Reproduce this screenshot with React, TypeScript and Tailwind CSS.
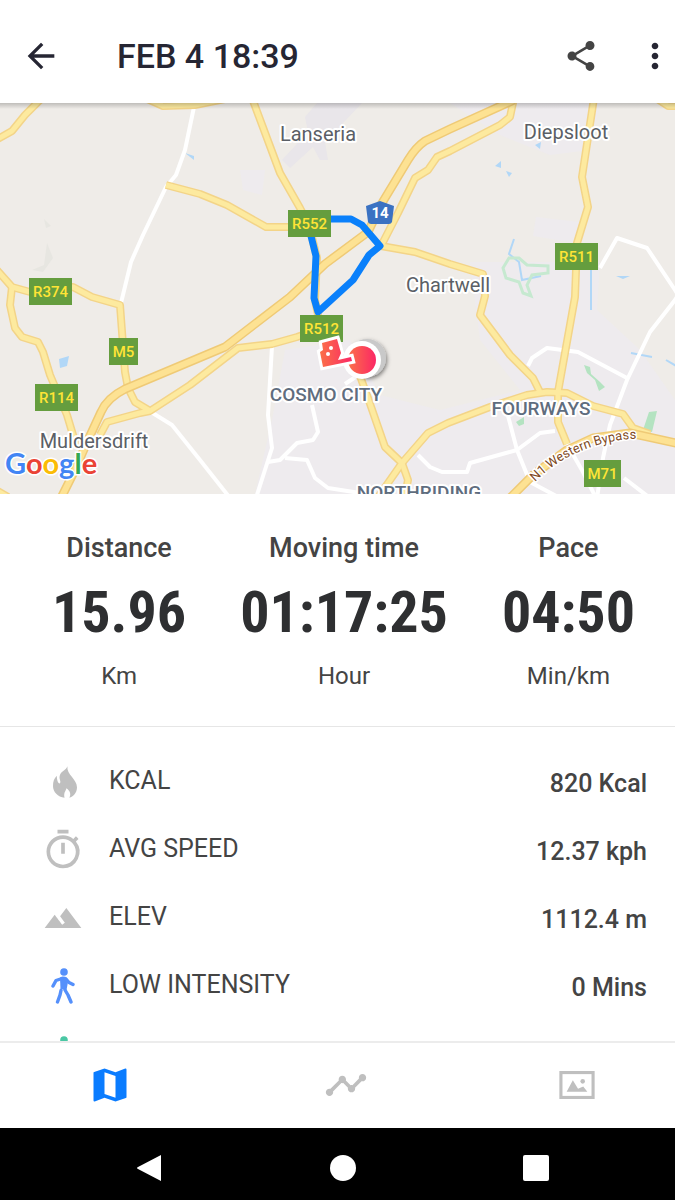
import React from 'react';
import {
  MdArrowBack,
  MdLandscape,
  MdMap,
  MdMoreVert,
  MdOutlineTimer,
  MdShare,
  MdTimeline,
} from 'react-icons/md';

interface Stat {
  label: string;
  value: string;
  unit: string;
}

interface Metric {
  label: string;
  value: string;
  icon: React.ReactNode;
}

interface Shield {
  label: string;
  x: number;
  y: number;
  width: number;
}

interface Place {
  name: string;
  x: number;
  y: number;
  suburb?: boolean;
}

const YELLOW_ROADS = [
  'M-4 140L12 131L25 115L42 98',
  'M145 98L163 106L195 105L225 99',
  'M166 185L200 194L227 205L266 227H305',
  'M252 98L280 173L300 208L309 225L317 258L315 300L320 325',
  'M100 435L107 422L140 413L150 411L190 385L225 358L238 348L272 344L297 337L322 328',
  'M381 246L415 252L450 264L483 274L485 296L480 315L510 355L533 378L540 392',
  'M381 246L398 213L415 178L428 170L437 157L450 151L500 125L510 117L514 98',
  'M594 98L582 177L588 207L577 243L575 297L558 392V422L567 444',
  'M376 500L388 483L402 463L428 433L448 423L490 407L527 395L547 392L567 393L593 406L623 414L633 428L650 434',
  'M360 376L368 398L385 447L402 463L408 480L404 500',
  'M-4 269L12 287L30 292L73 287L92 297L120 305L125 372L128 388L135 402L150 411',
  'M12 287L10 305L15 328L22 337L38 342L43 352L50 375L67 415L76 445',
  'M656 98L668 106H680',
  'M-4 490L8 497',
];

const HIGHWAYS = [
  'M60 500L75 470L88 440L101 412Q107 398 125 389L225 347L290 297L325 264L368 232L382 203L408 160Q416 147 425 141L450 129L514 100',
  'M508 500L533 475L567 450L593 438L630 433L680 444',
];

const WHITE_ROADS = [
  'M194 107L185 150L176 175L166 187L143 235L131 262L121 303',
  'M151 412L172 425L200 460L230 498',
  'M272 346L268 415L272 448L256 498',
  'M268 462L280 460L297 443L313 440L318 432L312 405',
  'M285 458L307 460L315 478L328 488L360 493',
  'M345 384L360 374',
  'M418 455L430 467L442 472H467L470 463L517 450L540 433L555 431',
  'M507 412L517 450L530 482L560 498',
  'M528 366L532 358L547 348L578 352L627 378',
  'M680 292L675 300L650 332L627 380L610 425L603 458L597 498',
  'M600 268L617 238L647 248L675 290L680 298',
  'M567 444L583 472L596 498',
  'M624 478L650 498',
];

const URBAN_AREAS = [
  'M450 103L600 103L590 150L550 155L500 135Z',
  'M536 217L580 222L575 243L533 236Z',
  'M470 262L600 262L597 310L640 350L675 400V494H255L272 420L285 350L350 340L380 395L440 410L520 390L480 340Z',
  'M240 170L265 170L262 195L243 190Z',
];

const SHIELDS: Shield[] = [
  { label: 'R552', x: 288, y: 210, width: 43 },
  { label: 'R511', x: 555, y: 243, width: 43 },
  { label: 'R374', x: 29, y: 278, width: 43 },
  { label: 'M5', x: 109, y: 338, width: 29 },
  { label: 'R114', x: 35, y: 384, width: 43 },
  { label: 'R512', x: 300, y: 315, width: 43 },
  { label: 'M71', x: 584, y: 460, width: 37 },
];

const PLACES: Place[] = [
  { name: 'Lanseria', x: 318, y: 141 },
  { name: 'Diepsloot', x: 566, y: 139 },
  { name: 'Chartwell', x: 448, y: 292 },
  { name: 'Muldersdrift', x: 94, y: 448 },
  { name: 'COSMO CITY', x: 326, y: 401, suburb: true },
  { name: 'FOURWAYS', x: 541, y: 415, suburb: true },
  { name: 'NORTHRIDING', x: 419, y: 499, suburb: true },
];

const STATS: Stat[] = [
  { label: 'Distance', value: '15.96', unit: 'Km' },
  { label: 'Moving time', value: '01:17:25', unit: 'Hour' },
  { label: 'Pace', value: '04:50', unit: 'Min/km' },
];

const FlameIcon = () => (
  <svg viewBox="0 0 25 33" className="ml-1 h-8 w-6" fill="currentColor" aria-hidden="true">
    <path d="M15 0C14 9 25 13 25 22C25 28 21 32 17 33C19 29 18 26 14 23C13 27 11 27 12 33C5 32 0 27 0 21C0 16 1 13 4 10C4 14 5 18 7 18C9 16 6 14 7 10C8 5 14 4 15 0Z" />
  </svg>
);

const WalkIcon = ({ className }: { className: string }) => (
  <svg viewBox="0 0 24 36" className={`h-9 w-6 ${className}`} aria-hidden="true">
    <circle cx="13" cy="4" r="3.8" fill="currentColor" />
    <path d="M9 9.5Q13 7.5 16 10L17 14L15.5 22L9.5 21Z" fill="currentColor" />
    <path
      d="M11 10.5L5 12.5L2 18M15 11L18 14.5L22 16.5M10 22.5L9 27L6.5 34M14 22L17 27L20 34"
      fill="none"
      stroke="currentColor"
      strokeWidth="3.4"
      strokeLinecap="round"
      strokeLinejoin="round"
    />
  </svg>
);

const PhotoIcon = () => (
  <svg viewBox="0 0 34 27" className="h-7 w-9" aria-hidden="true">
    <rect x="1.5" y="1.5" width="31" height="24" fill="none" stroke="currentColor" strokeWidth="3" />
    <path d="M7 20L13 9L18 17L23 15L27 20Z" fill="currentColor" />
    <circle cx="22.5" cy="10" r="2.2" fill="currentColor" />
  </svg>
);

const METRICS: Metric[] = [
  { label: 'KCAL', value: '820 Kcal', icon: <FlameIcon /> },
  { label: 'AVG SPEED', value: '12.37 kph', icon: <MdOutlineTimer className="size-11 shrink-0" /> },
  { label: 'ELEV', value: '1112.4 m', icon: <MdLandscape className="size-10 shrink-0" /> },
  { label: 'LOW INTENSITY', value: '0 Mins', icon: <WalkIcon className="text-[#5590fb]" /> },
];

const RouteMap = () => (
  <svg viewBox="0 103 675 391" className="block h-auto w-full shrink-0" role="img" aria-label="Route map">
    <defs>
      <linearGradient id="pin" x1="0" x2="1" y1="0" y2="0">
        <stop offset="0" stopColor="#fb7048" />
        <stop offset="1" stopColor="#fb2765" />
      </linearGradient>
      <linearGradient id="topShade" x1="0" x2="0" y1="0" y2="1">
        <stop offset="0" stopColor="#000" stopOpacity="0.2" />
        <stop offset="1" stopColor="#000" stopOpacity="0" />
      </linearGradient>
      <filter id="pinShadow" x="-50%" y="-50%" width="200%" height="200%">
        <feDropShadow dx="1" dy="2" stdDeviation="2" floodOpacity="0.5" />
      </filter>
      <path id="bypass" d="M535 482Q570 446 628 439L670 437" />
    </defs>

    <rect y="103" width="675" height="391" fill="#efece8" />
    {URBAN_AREAS.map(d => (
      <path key={d} d={d} fill="#eeebee" />
    ))}

    {/* Airport */}
    <path d="M317 103H362L325 142L328 160L320 160L313 147L290 168L282 160L308 132L305 117Z" fill="#e9e6ea" />

    {/* Water and parks */}
    <g fill="#b1d7f7">
      <path d="M185 153L194 156V160Z" />
      <path d="M59 359L69 356L67 366L60 368Z" />
      <path d="M495 166L501 161V168ZM506 171L512 173L509 177ZM535 145L541 142L540 149ZM616 276H630L623 279Z" />
    </g>
    <g fill="none" stroke="#b1d7f7" strokeWidth="2">
      <path d="M514 239L509 254L519 262L522 280L541 276" />
      <path d="M591 270V310M631 353L652 357M666 360L678 367" />
    </g>
    <path
      d="M509 258L503 268L506 278L519 282L523 293L531 296L527 285L532 275L548 273V266L527 265L519 258Z"
      fill="none"
      stroke="#c6e9d0"
      strokeWidth="3"
    />
    <path
      d="M649 412L657 411L652 432L643 430ZM516 422L524 417V424L519 426ZM584 365L590 367L591 374L600 382L605 387L599 391L595 380L587 373Z"
      fill="#b4e3c1"
    />
    <path d="M44 219L51 226L46 228M47 243L53 258L43 272L32 270L44 265Z" fill="#e7e6e1" />

    <g fill="none" strokeLinejoin="round">
      {WHITE_ROADS.map(d => (
        <path key={d} d={d} stroke="#fff" strokeWidth="4" />
      ))}
      {YELLOW_ROADS.map(d => (
        <path key={d} d={d} stroke="#f3d488" strokeWidth="8" />
      ))}
      {YELLOW_ROADS.map(d => (
        <path key={d} d={d} stroke="#fdea9f" strokeWidth="5" />
      ))}
      {HIGHWAYS.map(d => (
        <path key={d} d={d} stroke="#efca76" strokeWidth="9" />
      ))}
      {HIGHWAYS.map(d => (
        <path key={d} d={d} stroke="#fde293" strokeWidth="6" />
      ))}
    </g>

    {/* Recorded route */}
    <path
      d="M309 228L316 256L314 298L318 312L353 280L369 255L380 246L362 225L351 219H320"
      fill="none"
      stroke="#0a80fb"
      strokeWidth="7"
      strokeLinejoin="round"
    />

    {SHIELDS.map(shield => (
      <g key={shield.label}>
        <rect x={shield.x} y={shield.y} width={shield.width} height="27" fill="#659d3e" />
        <text
          x={shield.x + shield.width / 2}
          y={shield.y + 19}
          textAnchor="middle"
          className="text-[15px] font-medium"
          fill="#ffe436"
        >
          {shield.label}
        </text>
      </g>
    ))}

    <path d="M366 206L380 201L394 206L392 222Q391 224 389 224H371Q369 224 368 222Z" fill="#3b72c2" />
    <text x="380" y="218" textAnchor="middle" className="text-[15px] font-bold" fill="#fff">
      14
    </text>

    <g textAnchor="middle" stroke="#fff" strokeWidth="4" strokeLinejoin="round" paintOrder="stroke">
      {PLACES.map(place => (
        <text
          key={place.name}
          x={place.x}
          y={place.y}
          className={place.suburb ? 'text-[19px] font-medium' : 'text-[20px]'}
          fill={place.suburb ? '#5f6d7e' : '#5b5f66'}
        >
          {place.name}
        </text>
      ))}
    </g>
    <text className="text-[13px]" fill="#7f4a22" stroke="#fff" strokeWidth="3" paintOrder="stroke">
      <textPath href="#bypass">N1 Western Bypass</textPath>
    </text>

    {/* Start and finish pins */}
    <circle cx="367" cy="358" r="19" fill="#c9c9c9" filter="url(#pinShadow)" />
    <circle cx="362" cy="360" r="19" fill="#fff" />
    <circle cx="362" cy="360" r="14" fill="url(#pin)" />
    <path
      d="M322 343L337 339L341 353L338 360L351 357L352 361L323 367L320 352L323 350Z"
      fill="url(#pin)"
      stroke="#fff"
      strokeWidth="6"
      paintOrder="stroke"
    />
    <circle cx="331" cy="348" r="2" fill="#fff" />
    <circle cx="328" cy="354" r="2" fill="#fff" />

    <text
      x="5"
      y="474"
      className="font-['Lato',sans-serif] text-[29px] font-bold"
      stroke="#fff"
      strokeWidth="3"
      paintOrder="stroke"
    >
      <tspan fill="#4285f4">G</tspan>
      <tspan fill="#ea4335">o</tspan>
      <tspan fill="#fbbc05">o</tspan>
      <tspan fill="#4285f4">g</tspan>
      <tspan fill="#34a853">l</tspan>
      <tspan fill="#ea4335">e</tspan>
    </text>

    <rect y="103" width="675" height="6" fill="url(#topShade)" />
  </svg>
);

export default function App() {
  return (
    <div className="flex h-screen flex-col overflow-hidden bg-white font-['Roboto',sans-serif] text-[#444]">
      <header className="flex shrink-0 items-center pt-9 pb-[27px] pl-[21px] text-[#262633]">
        <button type="button" aria-label="Back">
          <MdArrowBack className="size-10" />
        </button>
        <h1 className="ml-14 flex-1 text-[34px] leading-10 font-medium">FEB 4 18:39</h1>
        <button type="button" aria-label="Share" className="mr-9 text-[#444]">
          <MdShare className="size-9" />
        </button>
        <button type="button" aria-label="More options">
          <MdMoreVert className="size-10" />
        </button>
      </header>

      <RouteMap />

      {/* Headline numbers */}
      <section className="flex shrink-0 justify-between border-b border-[#e6e6e6] pt-9 pr-10 pb-8 pl-13 text-center">
        {STATS.map(stat => (
          <div key={stat.label}>
            <h2 className="text-[27px] leading-9 font-medium">{stat.label}</h2>
            <p className="font-['Roboto_Condensed','Liberation_Sans_Narrow',sans-serif] text-[58px] leading-[92px] font-bold text-[#2e2f31]">
              {stat.value}
            </p>
            <p className="text-2xl leading-9">{stat.unit}</p>
          </div>
        ))}
      </section>

      <ul className="min-h-0 flex-1 overflow-hidden pt-[23px] pr-7">
        {METRICS.map(metric => (
          <li key={metric.label} className="flex h-17 items-center">
            <span className="flex w-[109px] shrink-0 justify-center pr-4 pb-1 pl-8 text-[#bfbfbf]">{metric.icon}</span>
            <span className="flex-1 pb-[6px] text-[25px]">{metric.label}</span>
            <span className="text-[25px] font-medium">{metric.value}</span>
          </li>
        ))}
        <li className="flex h-17 items-center">
          <span className="flex w-[109px] shrink-0 justify-center pr-4 pb-1 pl-8">
            <WalkIcon className="text-[#4ac7a4]" />
          </span>
        </li>
      </ul>

      <nav className="flex shrink-0 items-center justify-between border-t-2 border-[#ececec] pt-5 pr-20 pb-[21px] pl-[88px] text-[#bfbfbf]">
        <button type="button" aria-label="Map" className="text-[#0a7cff]">
          <MdMap className="size-11" />
        </button>
        <button type="button" aria-label="Charts">
          <MdTimeline className="size-11" />
        </button>
        <button type="button" aria-label="Photos">
          <PhotoIcon />
        </button>
      </nav>

      {/* System navigation */}
      <div className="flex shrink-0 items-center justify-between bg-black pt-6 pr-[123px] pb-4 pl-[133px] text-white">
        <button type="button" aria-label="System back">
          <svg viewBox="0 0 32 32" className="size-8" fill="currentColor" aria-hidden="true">
            <path d="M28 3L5 15Q3 16 5 17L28 29Z" />
          </svg>
        </button>
        <button type="button" aria-label="Home">
          <svg viewBox="0 0 32 32" className="size-8" fill="currentColor" aria-hidden="true">
            <circle cx="16" cy="16" r="13" />
          </svg>
        </button>
        <button type="button" aria-label="Recent apps">
          <svg viewBox="0 0 32 32" className="size-8" fill="currentColor" aria-hidden="true">
            <rect x="3" y="3" width="26" height="26" rx="2" />
          </svg>
        </button>
      </div>
    </div>
  );
}
